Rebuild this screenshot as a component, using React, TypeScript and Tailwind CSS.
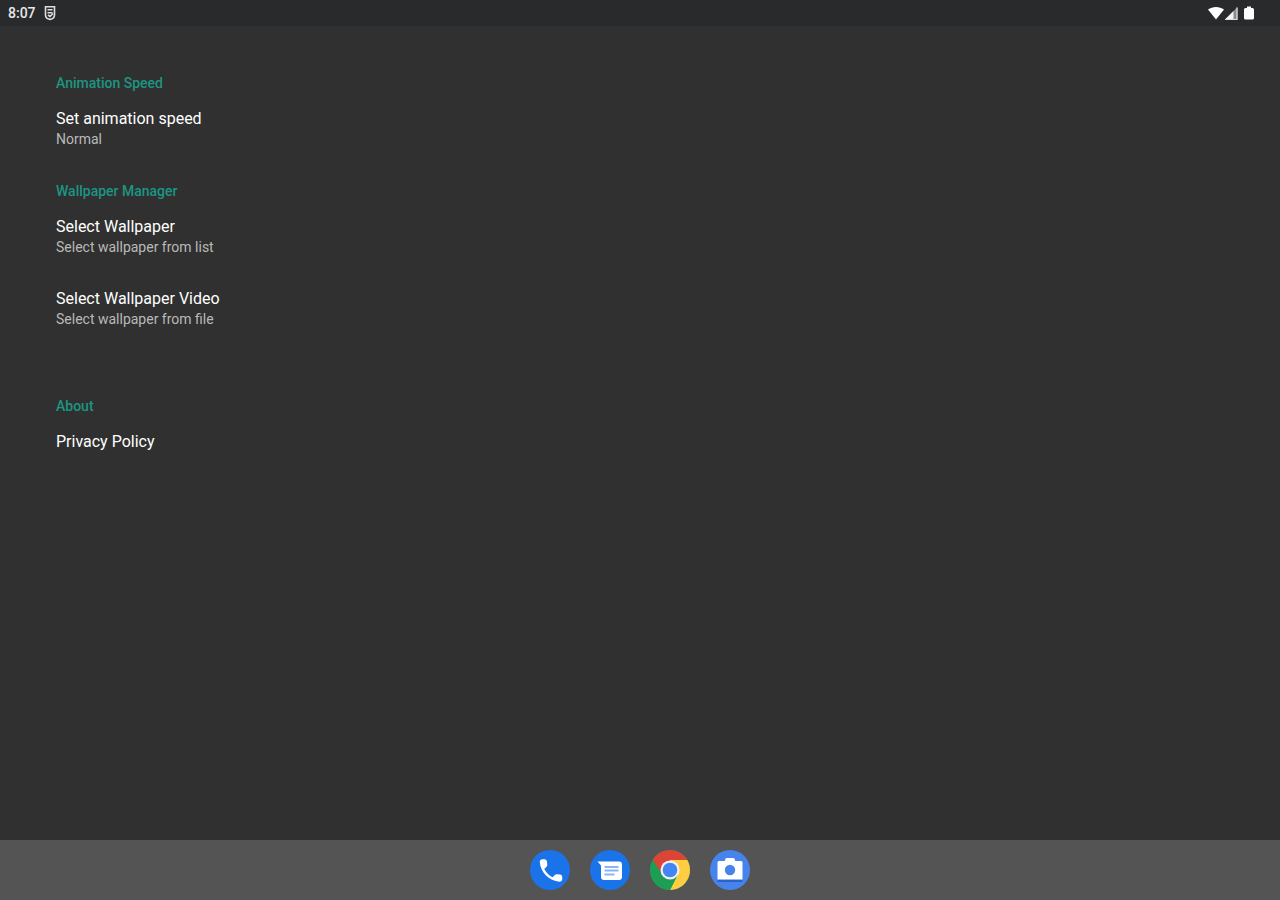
interface Preference {
  title: string;
  summary?: string;
}

interface Category {
  title: string;
  items: Preference[];
}

const categories: Category[] = [
  {
    title: 'Animation Speed',
    items: [{ title: 'Set animation speed', summary: 'Normal' }],
  },
  {
    title: 'Wallpaper Manager',
    items: [
      { title: 'Select Wallpaper', summary: 'Select wallpaper from list' },
      { title: 'Select Wallpaper Video', summary: 'Select wallpaper from file' },
    ],
  },
  // untitled category, only takes up the header space
  { title: '', items: [] },
  {
    title: 'About',
    items: [{ title: 'Privacy Policy' }],
  },
];

function StatusBar() {
  return (
    <header className="flex h-[26px] items-center justify-between bg-[#282a2b] pl-2 pr-[25px] text-white">
      <div className="flex items-center gap-2">
        <span className="text-sm leading-4 font-medium text-[#e8e8e8]">8:07</span>
        <svg className="h-4 w-3" viewBox="0 0 12 16" fill="none" stroke="#dedede" strokeWidth="1.6">
          <path d="M1.5 1.8h9v8.2c0 2.5-2 4-4.5 4.4C3.500 14 1.500 12.500 1.500 10z" />
          <path d="M3.500 4.800h5M3.500 7.800h5M4 10l2 1.500 3-3" />
        </svg>
      </div>
      <div className="flex items-center">
        <svg className="h-4 w-4" viewBox="0 0 16 16" fill="currentColor">
          <path d="M0 4.500C4.500 1 11.500 1 16 4.500L8 14.500z" />
        </svg>
        <svg className="mr-1 h-4 w-[15px]" viewBox="0 0 15 16">
          <path d="M1 14.500L13.500 2v12.500z" fill="#8a8b8c" />
          <path d="M1 14.500L9.500 6v8.500z" fill="#f4f4f4" />
          <path d="M13 2.500v12H1" fill="none" stroke="#dedede" strokeWidth="1.200" />
        </svg>
        <svg className="h-4 w-3" viewBox="0 0 12 16" fill="currentColor">
          <path d="M4 1.500h4V3h1.500q1.500 0 1.500 1.500v8.500q0 1.500-1.500 1.500h-7Q1 14.500 1 13V4.500Q1 3 2.500 3H4z" />
        </svg>
      </div>
    </header>
  );
}

function PreferenceRow({ title, summary }: Preference) {
  return (
    <button type="button" className="block w-full px-14 py-4 text-left hover:bg-white/5">
      <span className="block text-base leading-5 text-white">{title}</span>
      {summary && <span className="block text-sm leading-5 text-[#b9b9b9]">{summary}</span>}
    </button>
  );
}

function PhoneIcon() {
  return (
    <svg className="h-10 w-10" viewBox="0 0 40 40">
      <circle cx="20" cy="20" r="20" fill="#1a73e8" />
      <path
        transform="translate(6 5.500) scale(1.250)"
        fill="#fff"
        d="M19.230 15.260l-2.540-.29c-.61-.07-1.210.14-1.640.57l-1.840 1.840c-2.830-1.440-5.150-3.750-6.590-6.590l1.850-1.850c.43-.43.64-1.030.57-1.640l-.29-2.520c-.12-1.010-.97-1.770-1.990-1.770H5.030c-1.130 0-2.070.94-2 2.070.53 8.540 7.360 15.360 15.890 15.890 1.130.07 2.070-.87 2.070-2v-1.730c.01-1.010-.75-1.860-1.760-1.980z"
      />
    </svg>
  );
}

function MessagesIcon() {
  return (
    <svg className="h-10 w-10" viewBox="0 0 40 40">
      <circle cx="20" cy="20" r="20" fill="#1a73e8" />
      <path d="M7.500 11.500H29q3 0 3 3v12.500q0 3-3 3H14q-3 0-3-3V15.500z" fill="#fff" />
      <path d="M14.500 17h14M14.500 20.500h14M14.500 24.500h10" stroke="#8ab4f8" strokeWidth="2" />
    </svg>
  );
}

function ChromeIcon() {
  return (
    <svg className="h-10 w-10" viewBox="0 0 40 40">
      <circle cx="20" cy="20" r="20" fill="#1e9e55" />
      <path d="M2.680 10A20 20 0 0 1 37.320 10L20 11L12.200 24.500z" fill="#db4437" />
      <path d="M37.320 10A20 20 0 0 1 20 40L27.800 24.500L20 10z" fill="#ffcd40" />
      <path d="M2.680 10A20 20 0 0 0 20 40L27.800 24.500L20 20L12.200 24.500z" fill="#1e9e55" />
      <circle cx="20" cy="20" r="9.500" fill="#f1f1f1" />
      <circle cx="20" cy="20" r="7.300" fill="#4285f4" />
    </svg>
  );
}

function CameraIcon() {
  return (
    <svg className="h-10 w-10" viewBox="0 0 40 40">
      <circle cx="20" cy="20" r="20" fill="#4683ea" />
      <path d="M7.500 29.500h25v2.500h-25z" fill="#2a62c8" />
      <path d="M9 11h5.500l1.500-3h8l1.500 3H31q1.500 0 1.500 1.500v17h-25v-17Q7.500 11 9 11z" fill="#fff" />
      <circle cx="20" cy="20" r="5.200" fill="#4683ea" />
    </svg>
  );
}

const apps = [
  { name: 'Phone', Icon: PhoneIcon },
  { name: 'Messages', Icon: MessagesIcon },
  { name: 'Chrome', Icon: ChromeIcon },
  { name: 'Camera', Icon: CameraIcon },
];

export default function App() {
  return (
    <div className="flex min-h-screen flex-col bg-[#303030] font-[Roboto,sans-serif]">
      <StatusBar />
      <main className="flex-1 pt-[31px]">
        {categories.map((category, i) => (
          <section key={i}>
            <h2 className="min-h-[35px] px-14 pt-4 text-sm leading-5 font-medium text-[#1b9682]">
              {category.title}
            </h2>
            {category.items.map((item) => (
              <PreferenceRow key={item.title} {...item} />
            ))}
          </section>
        ))}
      </main>
      <nav className="flex h-[60px] items-center justify-center gap-5 bg-[#545454]">
        {apps.map(({ name, Icon }) => (
          <button key={name} type="button" aria-label={name} className="rounded-full">
            <Icon />
          </button>
        ))}
      </nav>
    </div>
  );
}
